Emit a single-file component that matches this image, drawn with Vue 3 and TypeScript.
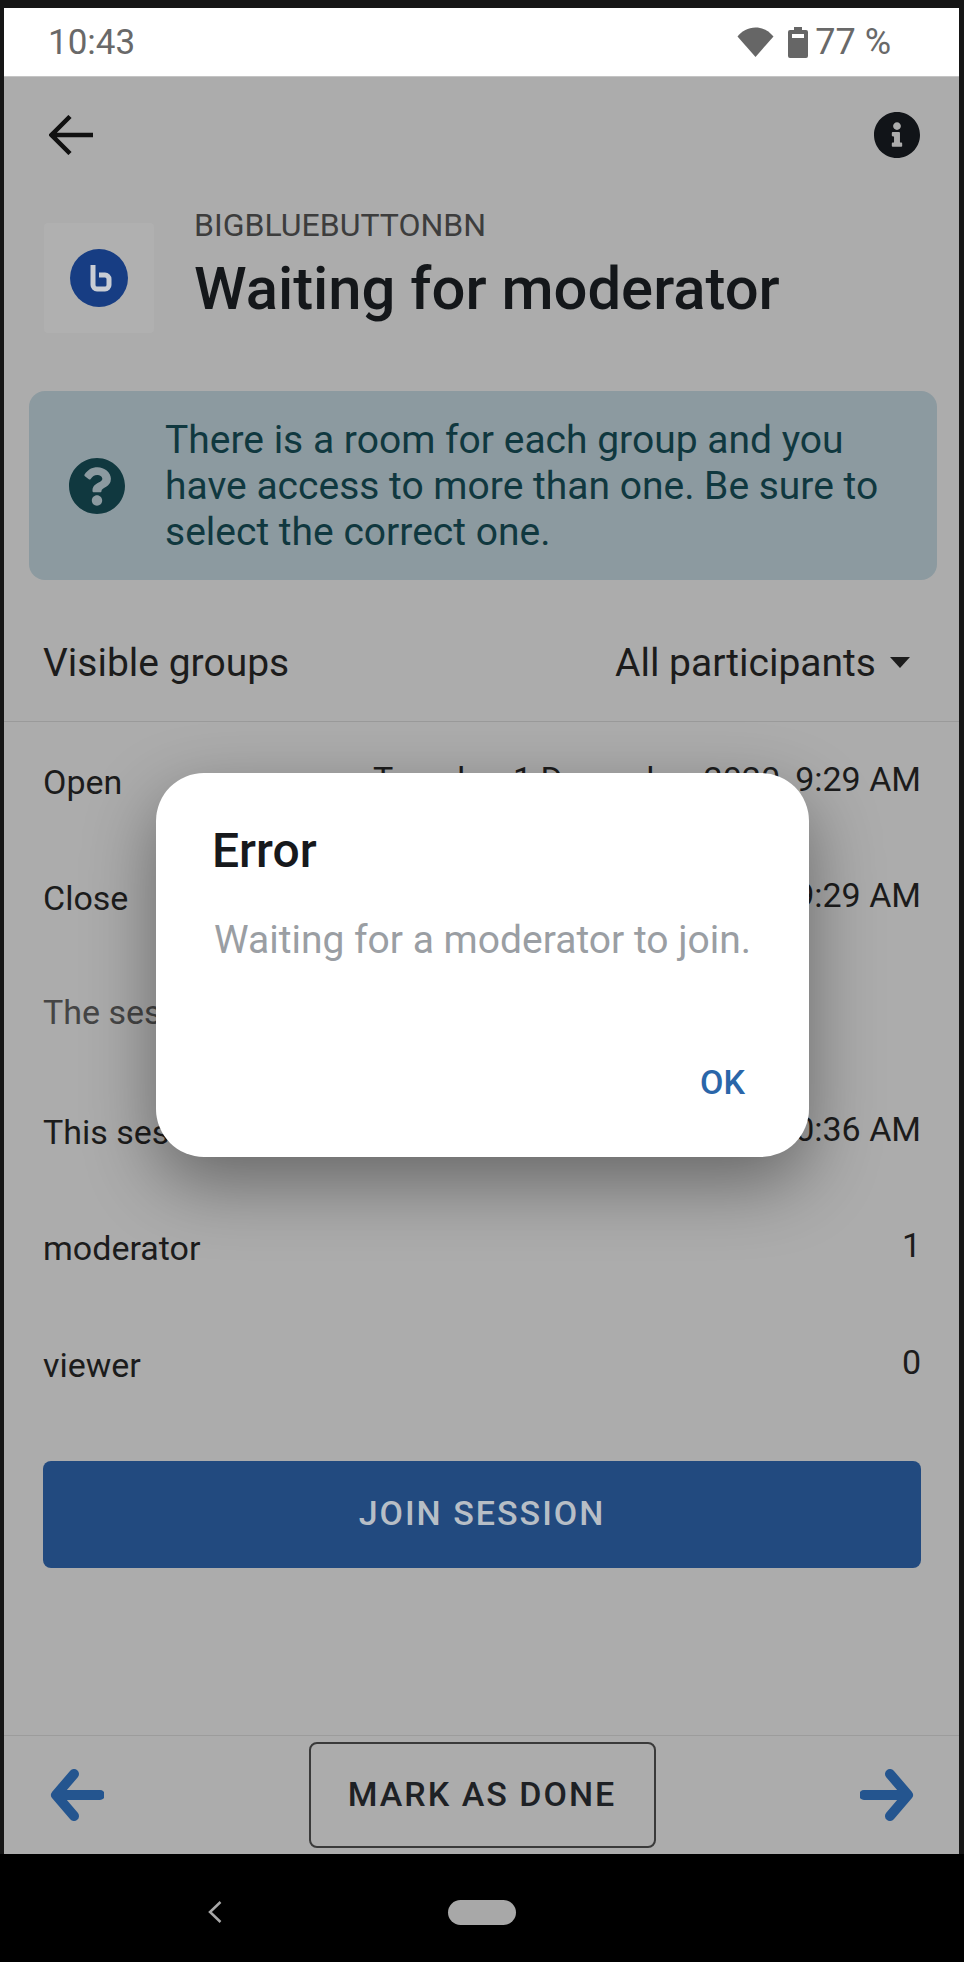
<template>
  <div class="frame">
    <div class="status-bar">
      <span class="clock">10:43</span>
      <div class="status-right">
        <svg class="wifi" viewBox="0 0 37 30"><path d="M18.5 30 0.5 9.5C5 4 11 0.5 18.5 0.5S32 4 36.5 9.5Z" /></svg>
        <svg class="battery" viewBox="0 0 20 31">
          <path d="M6 0h8v3h4a2 2 0 0 1 2 2v24a2 2 0 0 1-2 2H2a2 2 0 0 1-2-2V5a2 2 0 0 1 2-2h4Z" />
          <rect x="4" y="7" width="12" height="4" fill="#fff" />
        </svg>
        <span class="battery-text">77 %</span>
      </div>
    </div>

    <main class="screen">
      <div class="toolbar">
        <svg class="back" viewBox="0 0 44 40"><path d="M44 20H3M21 1.5 2.5 20 21 38.5" /></svg>
        <svg class="info" viewBox="8 8 496 496"><path :d="infoPath" /></svg>
      </div>

      <div class="head">
        <div class="module-icon">
          <svg viewBox="0 0 58 58">
            <circle cx="29" cy="29" r="29" fill="#173d83" />
            <path d="M23 16v20a4 4 0 0 0 4 4h8a4 4 0 0 0 4-4v-6a4 4 0 0 0-4-4h-6" class="bbb" />
          </svg>
        </div>
        <div class="head-text">
          <div class="module-name">BIGBLUEBUTTONBN</div>
          <h1>Waiting for moderator</h1>
        </div>
      </div>

      <div class="notice">
        <svg class="notice-icon" viewBox="8 8 496 496"><path :d="questionPath" /></svg>
        <p>There is a room for each group and you have access to more than one. Be sure to select the correct one.</p>
      </div>

      <div class="groups">
        <span>Visible groups</span>
        <span class="groups-select">All participants<i class="caret"></i></span>
      </div>

      <div v-for="row in rows" :key="row.label" class="row" :class="{ muted: row.muted }">
        <span class="row-label">{{ row.label }}</span>
        <span class="row-value">{{ row.value }}</span>
      </div>

      <button class="join">JOIN SESSION</button>

      <footer class="footer">
        <svg class="nav-arrow" viewBox="0 0 54 52"><path d="M50 26H7M24 5 6 26l18 21" /></svg>
        <button class="done">MARK AS DONE</button>
        <svg class="nav-arrow" viewBox="0 0 54 52"><path d="M4 26h43M30 5l18 21-18 21" /></svg>
      </footer>

      <div class="dialog">
        <h2>Error</h2>
        <p>Waiting for a moderator to join.</p>
        <button class="ok">OK</button>
      </div>
    </main>

    <div class="nav-bar">
      <svg class="nav-back" viewBox="0 0 14 22"><path d="M12.5 1 2 11l10.5 10" /></svg>
      <div class="nav-home"></div>
    </div>
  </div>
</template>

<script setup lang="ts">
interface InfoRow {
  label: string
  value: string
  muted?: boolean
}

const rows: InfoRow[] = [
  { label: 'Open', value: 'Tuesday, 1 December 2020, 9:29 AM' },
  { label: 'Close', value: 'Tuesday, 1 December 2020, 9:29 AM' },
  { label: 'The session has not started yet.', value: '', muted: true },
  { label: 'This session started at', value: '1 December 2020, 10:36 AM' },
  { label: 'moderator', value: '1' },
  { label: 'viewer', value: '0' },
]

const infoPath =
  'M256 8C119.043 8 8 119.083 8 256c0 136.997 111.043 248 248 248s248-111.003 248-248C504 119.083 392.957 8 256 8zm0 110c23.196 0 42 18.804 42 42s-18.804 42-42 42-42-18.804-42-42 18.804-42 42-42zm56 254c0 6.627-5.373 12-12 12h-88c-6.627 0-12-5.373-12-12v-24c0-6.627 5.373-12 12-12h12v-64h-12c-6.627 0-12-5.373-12-12v-24c0-6.627 5.373-12 12-12h64c6.627 0 12 5.373 12 12v100h12c6.627 0 12 5.373 12 12v24z'
const questionPath =
  'M504 256c0 136.997-111.043 248-248 248S8 392.997 8 256C8 119.083 119.043 8 256 8s248 111.083 248 248zM262.655 90c-54.497 0-89.255 22.957-116.549 63.758-3.536 5.286-2.353 12.415 2.715 16.258l34.699 26.31c5.205 3.947 12.621 3.008 16.665-2.122 17.864-22.658 30.113-35.797 57.303-35.797 20.429 0 45.698 13.148 45.698 32.958 0 14.976-12.363 22.667-32.534 33.976C247.128 238.528 216 254.941 216 296v4c0 6.627 5.373 12 12 12h56c6.627 0 12-5.373 12-12v-1.333c0-28.462 83.186-29.647 83.186-106.667 0-58.002-60.165-102-116.531-102zM256 338c-25.365 0-46 20.635-46 46 0 25.364 20.635 46 46 46s46-20.636 46-46c0-25.365-20.635-46-46-46z'
</script>

<style>
html, body { margin: 0; background: #161616; }
</style>

<style scoped>
.frame { width: 964px; height: 1962px; overflow: hidden; background: #161616; padding-top: 8px; box-sizing: border-box; font-family: Roboto, "Liberation Sans", sans-serif; display: flex; flex-direction: column; }
.status-bar { margin: 0 5px 0 4px; height: 68px; flex: none; background: #fff; display: flex; align-items: center; justify-content: space-between; padding: 0 68px 0 44px; box-sizing: border-box; color: #696969; }
.clock { font-size: 35px; }
.status-right { display: flex; align-items: center; }
.wifi { width: 37px; height: 30px; fill: #666; }
.battery { width: 20px; height: 31px; fill: #666; margin-left: 14px; }
.battery-text { font-size: 36px; margin-left: 7px; }

.screen { position: relative; margin: 0 5px 0 4px; height: 1778px; flex: none; background: #acacac; display: flex; flex-direction: column; color: #1c1c1c; box-shadow: inset 0 1px 0 #c4c4c4; }
.toolbar { height: 110px; padding: 39px 39px 0 45px; box-sizing: border-box; display: flex; justify-content: space-between; align-items: flex-start; }
.back { width: 44px; height: 40px; fill: none; stroke: #111; stroke-width: 4.5; }
.info { width: 46px; height: 46px; margin-top: -3px; fill: #111418; }

.head { height: 147px; padding: 19px 39px 0; box-sizing: border-box; display: flex; align-items: flex-start; }
.module-icon { width: 110px; height: 110px; margin-top: 18px; margin-left: 1px; background: #b0b0b0; border-radius: 4px; flex: none; display: flex; align-items: center; justify-content: center; }
.module-icon svg { width: 58px; height: 58px; }
.bbb { fill: none; stroke: #c9cdd4; stroke-width: 5; }
.head-text { margin-left: 40px; }
.module-name { font-size: 32px; line-height: 40px; color: #3d3d3d; }
h1 { margin: 12px 0 0; font-size: 59.8px; line-height: 64px; font-weight: 500; color: #14171a; }

.notice { margin: 58px 22px 0 25px; height: 189px; flex: none; background: #8c9aa0; border-radius: 16px; display: flex; align-items: center; padding-left: 40px; box-sizing: border-box; color: #10383f; }
.notice-icon { width: 56px; height: 56px; fill: #10383f; flex: none; }
.notice p { margin: 0 0 0 40px; font-size: 39px; line-height: 46px; width: 720px; }

.groups { height: 142px; flex: none; padding: 24px 49px 0 39px; box-sizing: border-box; border-bottom: 1px solid #9a9a9a; display: flex; align-items: center; justify-content: space-between; font-size: 39px; }
.groups-select { display: flex; align-items: center; }
.caret { width: 0; height: 0; margin-left: 14px; border-left: 10px solid transparent; border-right: 10px solid transparent; border-top: 11px solid #1c1c1c; }

.row { height: 116.6px; flex: none; padding: 0 38px 0 39px; box-sizing: border-box; display: flex; align-items: center; justify-content: space-between; font-size: 34px; white-space: nowrap; }
.row-label { margin-top: 3px; }
.row-value { flex: none; margin-top: -3px; }
.row.muted { color: #454545; padding-bottom: 6px; }

.join { margin: 39px 38px 0 39px; height: 107px; flex: none; border: none; border-radius: 8px; padding: 0 0 3px; background: #224a7f; color: #b7bec6; font: 500 34px Roboto, "Liberation Sans", sans-serif; letter-spacing: 2px; }

.footer { margin-top: auto; height: 119px; flex: none; padding: 0 45px 0 46px; box-sizing: border-box; border-top: 1px solid #9c9c9c; display: flex; align-items: center; justify-content: space-between; }
.nav-arrow { width: 54px; height: 52px; fill: none; stroke: #24558f; stroke-width: 10; stroke-linecap: round; stroke-linejoin: round; }
.done { width: 347px; height: 106px; box-sizing: border-box; padding: 0 0 3px; background: transparent; border: 2px solid #3a3a3a; border-radius: 8px; color: #1e2125; font: 500 34px Roboto, "Liberation Sans", sans-serif; letter-spacing: 2px; }

.dialog { position: absolute; left: 152px; top: 697px; width: 653px; height: 384px; box-sizing: border-box; padding: 48px 64px 55px 56px; background: #fff; border-radius: 48px; box-shadow: 0 26px 70px rgba(0, 0, 0, 0.4); display: flex; flex-direction: column; }
.dialog h2 { margin: 0; font-size: 48px; line-height: 60px; font-weight: 500; color: #17191c; }
.dialog p { margin: 34px 0 0 2px; font-size: 39px; line-height: 50px; color: #9a9ea3; white-space: nowrap; }
.ok { margin-top: auto; align-self: flex-end; border: none; padding: 0; background: none; font: 500 34px/40px Roboto, "Liberation Sans", sans-serif; color: #2a66a9; }

.nav-bar { flex: 1; background: #000; display: flex; align-items: center; padding: 8px 0 0 208px; }
.nav-back { width: 14px; height: 22px; fill: none; stroke: #a8a8a8; stroke-width: 2.5; }
.nav-home { width: 68px; height: 25px; margin-left: 226px; border-radius: 13px; background: #a8a8a8; }
</style>
